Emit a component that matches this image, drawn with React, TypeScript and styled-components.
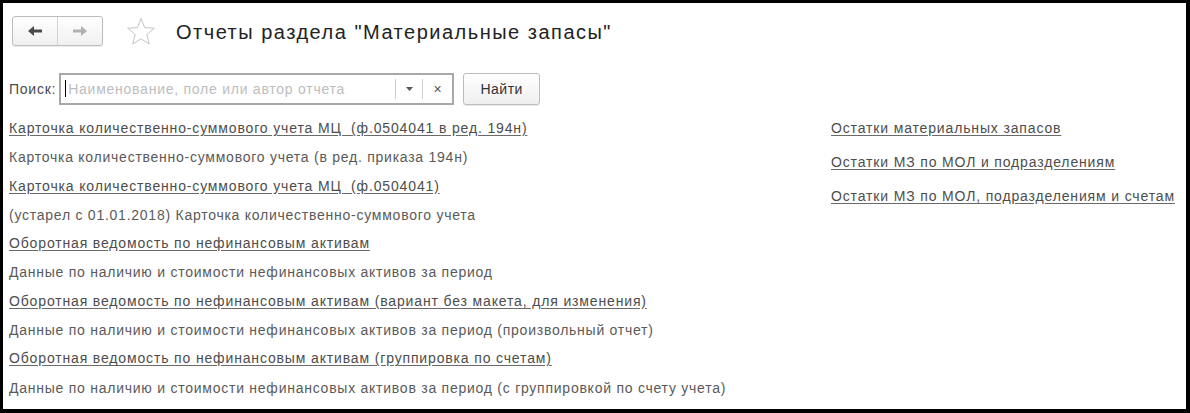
import React from "react";
import styled, { createGlobalStyle } from "styled-components";

const Global = createGlobalStyle`
  html, body { margin: 0; padding: 0; background: #fff; }
  body { font-family: Arial, "Liberation Sans", sans-serif; }
`;

const Frame = styled.div`
  width: 1190px;
  height: 413px;
  box-sizing: border-box;
  border-style: solid;
  border-color: #000;
  border-width: 3px 4px 4px 3px;
  background: #fff;
  overflow: hidden;
`;

const Header = styled.div`
  display: flex;
  align-items: center;
  padding: 13px 0 0 9px;
  height: 30px;
`;

const NavGroup = styled.div`
  display: flex;
  width: 91px;
  height: 30px;
  box-sizing: border-box;
  border: 1px solid #bdbdbd;
  border-radius: 3px;
  background: linear-gradient(#ffffff, #f0f0f0);
  box-shadow: 0 1px 1px rgba(0, 0, 0, 0.08);
`;

const NavButton = styled.div<{ $divider?: boolean }>`
  flex: 1;
  display: flex;
  align-items: center;
  justify-content: center;
  border-right: ${(p) => (p.$divider ? "1px solid #d4d4d4" : "none")};
`;

const StarBox = styled.div`
  margin-left: 23px;
  width: 30px;
  height: 30px;
  display: flex;
  align-items: center;
  justify-content: center;
`;

const Title = styled.h1`
  margin: 0 0 0 20px;
  font-size: 20px;
  font-weight: normal;
  letter-spacing: 1.5px;
  color: #222;
  line-height: 30px;
  position: relative;
  top: 1px;
`;

const SearchRow = styled.div`
  display: flex;
  align-items: center;
  padding: 26px 0 0 6px;
  height: 33px;
`;

const Label = styled.span`
  font-size: 14px;
  letter-spacing: 0.75px;
  color: #4a4a4a;
  margin-right: 3px;
`;

const InputBox = styled.div`
  display: flex;
  align-items: stretch;
  width: 395px;
  height: 32px;
  box-sizing: border-box;
  border: 2px solid #a8a8a8;
  background: #fff;
`;

const Placeholder = styled.div`
  flex: 1;
  display: flex;
  align-items: center;
  padding-left: 4px;
  font-size: 14px;
  letter-spacing: 0.75px;
  color: #bdbdbd;
`;

const Caret = styled.span`
  display: inline-block;
  width: 1px;
  height: 17px;
  background: #000;
  margin-right: 2px;
`;

const InputSide = styled.div<{ $w: number }>`
  width: ${(p) => p.$w}px;
  display: flex;
  align-items: center;
  justify-content: center;
  border-left: 1px solid #cfcfcf;
  margin: 4px 0;
  color: #555;
  font-size: 14px;
`;

const FindButton = styled.div`
  margin-left: 9px;
  width: 77px;
  height: 32px;
  box-sizing: border-box;
  border: 1px solid #bdbdbd;
  border-radius: 3px;
  background: linear-gradient(#ffffff, #efefef);
  box-shadow: 0 1px 1px rgba(0, 0, 0, 0.1);
  display: flex;
  align-items: center;
  justify-content: center;
  font-size: 14px;
  letter-spacing: 0.5px;
  color: #333;
`;

const Columns = styled.div`
  display: grid;
  grid-template-columns: 822px 1fr;
  padding: 9px 0 0 6px;
`;

const List = styled.div`
  display: flex;
  flex-direction: column;
`;

const LinkLine = styled.a`
  display: block;
  font-size: 14px;
  letter-spacing: 0.85px;
  line-height: 29.3px;
  color: #4d4d4d;
  text-decoration: underline;
  text-decoration-color: #6a6a6a;
  text-underline-offset: 2px;
  white-space: pre;
`;

const Desc = styled.div`
  font-size: 14px;
  letter-spacing: 0.75px;
  line-height: 28.3px;
  color: #5a5a5a;
  white-space: pre;
`;

const RightList = styled.div`
  display: flex;
  flex-direction: column;
  gap: 4.5px;
`;

const leftItems = [
  {
    link: "Карточка количественно-суммового учета МЦ  (ф.0504041 в ред. 194н)",
    desc: "Карточка количественно-суммового учета (в ред. приказа 194н)",
  },
  {
    link: "Карточка количественно-суммового учета МЦ  (ф.0504041)",
    desc: "(устарел с 01.01.2018) Карточка количественно-суммового учета",
  },
  {
    link: "Оборотная ведомость по нефинансовым активам",
    desc: "Данные по наличию и стоимости нефинансовых активов за период",
  },
  {
    link: "Оборотная ведомость по нефинансовым активам (вариант без макета, для изменения)",
    desc: "Данные по наличию и стоимости нефинансовых активов за период (произвольный отчет)",
  },
  {
    link: "Оборотная ведомость по нефинансовым активам (группировка по счетам)",
    desc: "Данные по наличию и стоимости нефинансовых активов за период (с группировкой по счету учета)",
  },
];

const rightItems = [
  "Остатки материальных запасов",
  "Остатки МЗ по МОЛ и подразделениям",
  "Остатки МЗ по МОЛ, подразделениям и счетам",
];

const ArrowLeft = ({ color }: { color: string }) => (
  <svg width="16" height="12" viewBox="0 0 16 12">
    <path d="M1 6 L7 1 L7 4.5 L15 4.5 L15 7.5 L7 7.5 L7 11 Z" fill={color} />
  </svg>
);

const ArrowRight = ({ color }: { color: string }) => (
  <svg width="16" height="12" viewBox="0 0 16 12">
    <path d="M15 6 L9 1 L9 4.5 L1 4.5 L1 7.5 L9 7.5 L9 11 Z" fill={color} />
  </svg>
);

const Star = () => (
  <svg width="30" height="29" viewBox="0 0 30 29">
    <path
      d="M15 1.5 L18.6 10.6 L28.3 11.2 L20.8 17.5 L23.2 27 L15 21.8 L6.8 27 L9.2 17.5 L1.7 11.2 L11.4 10.6 Z"
      fill="none"
      stroke="#c4c4c4"
      strokeWidth="1"
      strokeLinejoin="miter"
    />
  </svg>
);

export default function App() {
  return (
    <Frame>
      <Global />
      <Header>
        <NavGroup>
          <NavButton $divider>
            <ArrowLeft color="#4a4a4a" />
          </NavButton>
          <NavButton>
            <ArrowRight color="#b0b0b0" />
          </NavButton>
        </NavGroup>
        <StarBox>
          <Star />
        </StarBox>
        <Title>Отчеты раздела "Материальные запасы"</Title>
      </Header>
      <SearchRow>
        <Label>Поиск:</Label>
        <InputBox>
          <Placeholder>
            <Caret />
            Наименование, поле или автор отчета
          </Placeholder>
          <InputSide $w={26}>
            <svg width="7" height="4" viewBox="0 0 7 4">
              <path d="M0 0 L7 0 L3.5 4 Z" fill="#555" />
            </svg>
          </InputSide>
          <InputSide $w={29}>×</InputSide>
        </InputBox>
        <FindButton>Найти</FindButton>
      </SearchRow>
      <Columns>
        <List>
          {leftItems.map((it) => (
            <React.Fragment key={it.link}>
              <LinkLine>{it.link}</LinkLine>
              <Desc>{it.desc}</Desc>
            </React.Fragment>
          ))}
        </List>
        <RightList>
          {rightItems.map((t) => (
            <LinkLine key={t}>{t}</LinkLine>
          ))}
        </RightList>
      </Columns>
    </Frame>
  );
}
